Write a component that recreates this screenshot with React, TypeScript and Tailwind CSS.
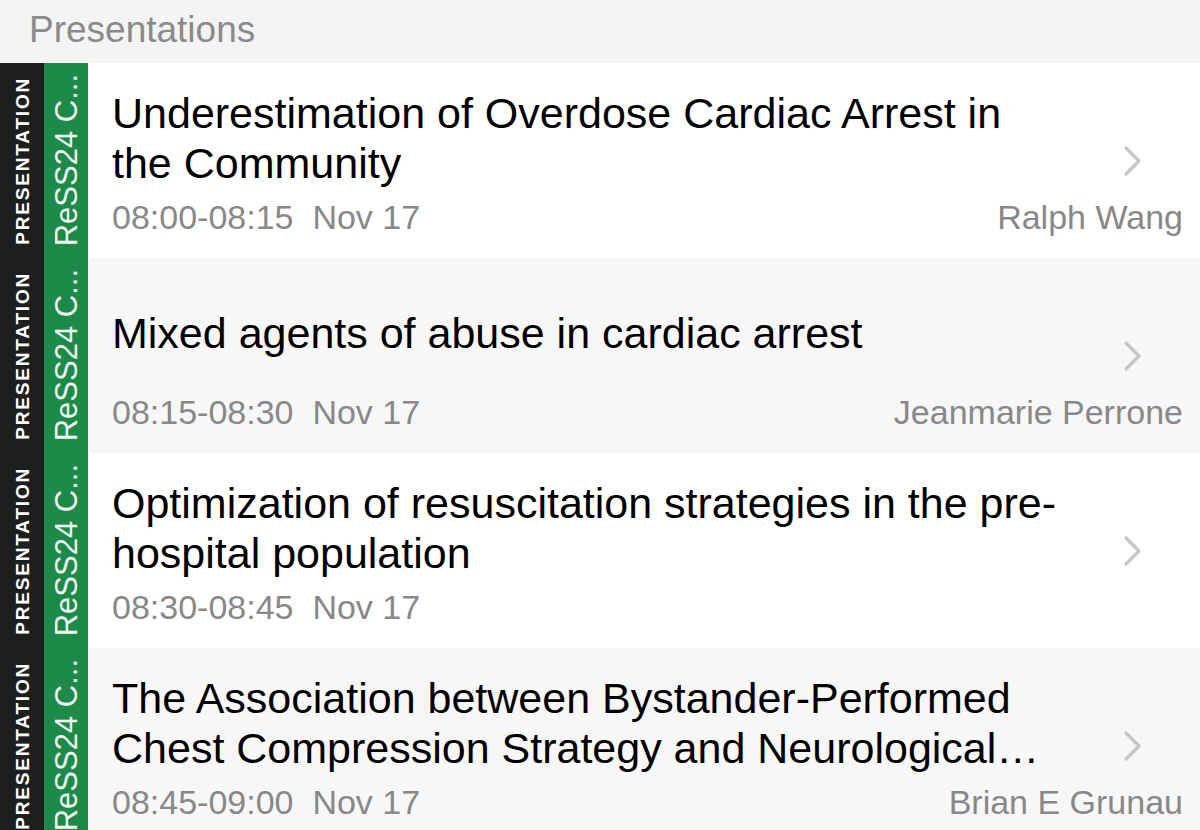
import React from "react"

type Session = {
  title: string
  time: string
  date: string
  speaker?: string
}

const sessions: Session[] = [
  {
    title: "Underestimation of Overdose Cardiac Arrest in the Community",
    time: "08:00-08:15",
    date: "Nov 17",
    speaker: "Ralph Wang",
  },
  {
    title: "Mixed agents of abuse in cardiac arrest",
    time: "08:15-08:30",
    date: "Nov 17",
    speaker: "Jeanmarie Perrone",
  },
  {
    title: "Optimization of resuscitation strategies in the pre-hospital population",
    time: "08:30-08:45",
    date: "Nov 17",
  },
  {
    title:
      "The Association between Bystander-Performed Chest Compression Strategy and Neurological Outcomes after Out-of-Hospital Cardiac Arrest",
    time: "08:45-09:00",
    date: "Nov 17",
    speaker: "Brian E Grunau",
  },
]

function Chevron() {
  return (
    <svg width="19" height="32" viewBox="0 0 19 32" fill="none">
      <path
        d="M3 3l13 13L3 29"
        stroke="#c6c6c6"
        strokeWidth="3.2"
        strokeLinecap="round"
        strokeLinejoin="round"
      />
    </svg>
  )
}

function SessionRow({ session, shaded }: { session: Session; shaded: boolean }) {
  return (
    <div className={`flex h-[195px] ${shaded ? "bg-[#f7f7f7]" : "bg-white"}`}>
      {/* type strip */}
      <div className="w-[44px] shrink-0 bg-[#1c1f1d] flex items-center justify-center">
        <span className="[writing-mode:vertical-rl] rotate-180 text-[19px] font-bold tracking-[1.8px] text-white leading-none">
          PRESENTATION
        </span>
      </div>
      {/* track strip */}
      <div className="w-[44px] shrink-0 bg-[#1d8a4a] flex items-center justify-center">
        <span className="[writing-mode:vertical-rl] rotate-180 text-[31px] text-[#eef8f1] leading-none whitespace-nowrap">
          ReSS24 C...
        </span>
      </div>

      <div className="flex-1 grid grid-cols-[1fr_auto] content-start pl-[24px] pr-[17px] pt-[25px]">
        <div className="col-start-1 row-start-1 h-[100px] flex items-center">
          <p className="max-w-[957px] text-[43px] leading-[50px] text-black line-clamp-2">
            {session.title}
          </p>
        </div>
        <div className="col-start-2 row-start-1 row-span-2 self-center pr-[41px] pb-[4px]">
          <Chevron />
        </div>
        <div className="col-start-1 col-end-3 row-start-2 mt-[9px] flex justify-between text-[34px] leading-[40px] text-[#888888]">
          <span className="whitespace-pre">
            {session.time}  {session.date}
          </span>
          {session.speaker && <span>{session.speaker}</span>}
        </div>
      </div>
    </div>
  )
}

export default function App() {
  return (
    <main className="min-h-screen bg-[#f4f4f4] font-['Liberation_Sans',Arial,sans-serif] overflow-hidden">
      <header className="h-[63px] pl-[29px] pt-[8px]">
        <h1 className="text-[37px] leading-[44px] text-[#8a8a8a]">Presentations</h1>
      </header>
      <div className="flex flex-col">
        {sessions.map((s, i) => (
          <SessionRow key={s.time} session={s} shaded={i % 2 === 1} />
        ))}
      </div>
    </main>
  )
}
